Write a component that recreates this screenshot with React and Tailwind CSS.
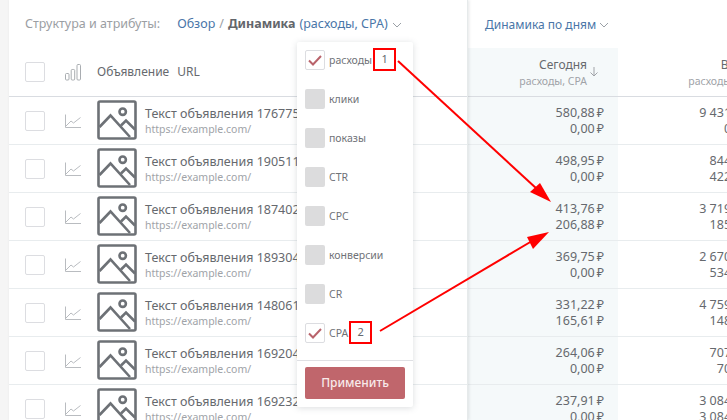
import React from 'react';

const rows = [
  { id: '176775', today: ['580,88', '0,00'], prev: ['9 431,12', '0,00'] },
  { id: '190511', today: ['498,95', '0,00'], prev: ['844,36', '422,18'] },
  { id: '187402', today: ['413,76', '206,88'], prev: ['3 719,40', '185,97'] },
  { id: '189304', today: ['369,75', '0,00'], prev: ['2 670,25', '534,05'] },
  { id: '148061', today: ['331,22', '165,61'], prev: ['4 759,80', '148,74'] },
  { id: '169204', today: ['264,06', '0,00'], prev: ['707,14', '70,71'] },
  { id: '169232', today: ['237,91', '0,00'], prev: ['3 084,16', '3 084,16'] },
];

const metrics = [
  { name: 'расходы', checked: true, mark: '1' },
  { name: 'клики' },
  { name: 'показы' },
  { name: 'CTR' },
  { name: 'CPC' },
  { name: 'конверсии' },
  { name: 'CR' },
  { name: 'CPA', checked: true, mark: '2' },
];

const Chevron = () => (
  <svg width="10" height="6" viewBox="0 0 10 6" fill="none" stroke="#9aa0a6" strokeWidth="1">
    <path d="M1 1l4 4 4-4" />
  </svg>
);

const Box = () => <div className="w-5 h-5 rounded-[2px] border border-[#dcdde1] bg-white shrink-0" />;

const ImageIcon = () => (
  <svg width="40" height="40" viewBox="0 0 40 40" fill="none" stroke="#6d7176" strokeWidth="2.6" className="shrink-0 -mt-[2px]">
    <rect x="1.5" y="1.5" width="37" height="37" rx="1.5" />
    <circle cx="25.7" cy="11.7" r="3.2" />
    <path d="M2.5 27L13.5 15.5L33 37" />
    <path d="M24 25.5L29 20.5L38 29.5" />
  </svg>
);

const TrendIcon = () => (
  <svg width="16" height="14" viewBox="0 0 16 14" fill="none" stroke="#b9bcc0" strokeWidth="1">
    <path d="M0.5 0.5V13.5H16" />
    <path d="M1 12L6 7L8.5 9L15.5 3.5" />
  </svg>
);

const BarsIcon = () => (
  <svg width="16" height="17" viewBox="0 0 16 17" fill="none" stroke="#a9adb1" strokeWidth="1">
    <rect x="0.5" y="9.5" width="3.5" height="6.5" rx="1" />
    <rect x="6.2" y="5.5" width="3.5" height="10.5" rx="1" />
    <rect x="12" y="0.5" width="3.5" height="15.5" rx="1" />
  </svg>
);

const Money = ({ value }) => (
  <div className="whitespace-nowrap leading-4">
    {value}<span className="ml-[2px]">₽</span>
  </div>
);

const App = () => (
  <div className="relative w-[727px] h-[420px] overflow-hidden flex bg-white font-['Noto_Sans',sans-serif] text-[12.5px] text-[#66696e]">
    <div className="w-[9px] shrink-0 bg-[#f5f5f5]" />

    {/* frozen left part */}
    <div className="relative z-10 w-[459px] shrink-0 bg-white border-r border-[#e6eaeb] shadow-[1px_0_3px_rgba(120,130,135,0.2)]">
      <div className="h-[48px] pl-4 pt-[1px] flex items-center whitespace-nowrap">
        <span className="text-[#9b9ea3]">Структура и атрибуты:</span>
        <span className="ml-[17px] text-[#4a76a8]">Обзор</span>
        <span className="mx-1 text-[#9b9ea3]">/</span>
        <span className="font-bold text-[#63666b]">Динамика</span>
        <span className="ml-1 text-[#4a76a8]">(расходы, CPA)</span>
        <span className="ml-1"><Chevron /></span>
      </div>
      <div className="h-[49px] pl-4 flex items-center border-b border-[#d9dce1] text-[12px]">
        <Box />
        <div className="ml-5 w-8"><BarsIcon /></div>
        <span>Объявление</span>
        <span className="ml-2">URL</span>
      </div>
      {rows.map((row) => (
        <div key={row.id} className="h-[48px] pl-4 flex items-center border-b border-[#e8ecee]">
          <Box />
          <div className="ml-5 w-8"><TrendIcon /></div>
          <ImageIcon />
          <div className="ml-2 pt-[1px] leading-4">
            <div className="whitespace-nowrap">Текст объявления {row.id}</div>
            <div className="text-[10.5px] leading-[15px] text-[#a0a3a8]">https://example.com/</div>
          </div>
        </div>
      ))}
    </div>

    {/* scrolling right part */}
    <div className="flex-1 min-w-0">
      <div className="h-[48px] pl-[17px] pt-[1px] flex items-center whitespace-nowrap text-[12px] text-[#4a76a8]">
        Динамика по дням
        <span className="ml-[3px]"><Chevron /></span>
      </div>
      <div className="flex w-[292px]">
        <div className="w-[150px] shrink-0 bg-[#f5f9fa]">
          <div className="h-[49px] pr-[31px] pt-[2px] flex flex-col justify-center items-end border-b border-[#d9dce1] relative">
            <div className="text-[12px] leading-4">Сегодня</div>
            <div className="text-[10.5px] leading-4 text-[#a0a3a8]">расходы, CPA</div>
            <svg className="absolute right-[20px] top-[19px]" width="8" height="10" viewBox="0 0 8 10" fill="none" stroke="#a0a3a8" strokeWidth="1">
              <path d="M4 0V9M0.5 5.5L4 9L7.5 5.5" />
            </svg>
          </div>
          {rows.map((row) => (
            <div key={row.id} className="h-[48px] pr-[14px] flex flex-col justify-center items-end border-b border-[#e8ecee]">
              <Money value={row.today[0]} />
              <Money value={row.today[1]} />
            </div>
          ))}
        </div>
        <div className="w-[142px] shrink-0">
          <div className="h-[49px] pr-[4px] pt-[2px] flex flex-col justify-center items-end border-b border-[#d9dce1]">
            <div className="text-[12px] leading-4">Вчера</div>
            <div className="text-[10.5px] leading-4 text-[#a0a3a8]">расходы, CPA</div>
          </div>
          {rows.map((row) => (
            <div key={row.id} className="h-[48px] pr-[2px] flex flex-col justify-center items-end border-b border-[#e8ecee]">
              <Money value={row.prev[0]} />
              <Money value={row.prev[1]} />
            </div>
          ))}
        </div>
      </div>
    </div>

    {/* metrics dropdown */}
    <div className="absolute z-20 left-[297px] top-[42px] w-[116px] h-[365px] bg-white rounded-[2px] shadow-[0_1px_6px_rgba(90,100,110,0.22)]">
      <div className="pt-[8px] pl-[8px]">
        {metrics.map((item) => (
          <div key={item.name} className="h-[39px] flex items-start">
            {item.checked ? (
              <div className="w-5 h-5 rounded-[2px] border border-[#dcdde1] bg-white flex items-center justify-center shrink-0">
                <svg width="14" height="11" viewBox="0 0 14 11" fill="none" stroke="#b9636b" strokeWidth="2">
                  <path d="M1 5.5L5 9.5L13 1" />
                </svg>
              </div>
            ) : (
              <div className="w-5 h-5 rounded-[2px] bg-[#dcdcdd] shrink-0" />
            )}
            <span className="ml-[4px] text-[10.5px] leading-5 text-[#6f7277]">{item.name}</span>
            {item.mark && (
              <span className="ml-[1px] -mt-[2px] w-[23px] h-[23px] border-2 border-[#ff0000] flex items-center justify-center text-[11px] text-[#66696e] shrink-0">
                {item.mark}
              </span>
            )}
          </div>
        ))}
      </div>
      <div className="-mt-[2px] border-t border-[#dfe0e4] pt-[6px] px-[8px]">
        <button className="w-[100px] h-[32px] rounded-[2px] bg-[#c0666c] text-[12px] font-medium text-[#f8eaea]">Применить</button>
      </div>
    </div>

    {/* annotation arrows */}
    <svg className="absolute z-30 left-0 top-0 pointer-events-none" width="727" height="420" fill="#ff0000" stroke="none">
      <path d="M398 61L537 189" stroke="#ff0000" strokeWidth="2" />
      <path d="M551 202L530 192L540 183Z" />
      <path d="M380 331L532 241" stroke="#ff0000" strokeWidth="2" />
      <path d="M549 232L527 237L533 249Z" />
    </svg>
  </div>
);

export default App;
